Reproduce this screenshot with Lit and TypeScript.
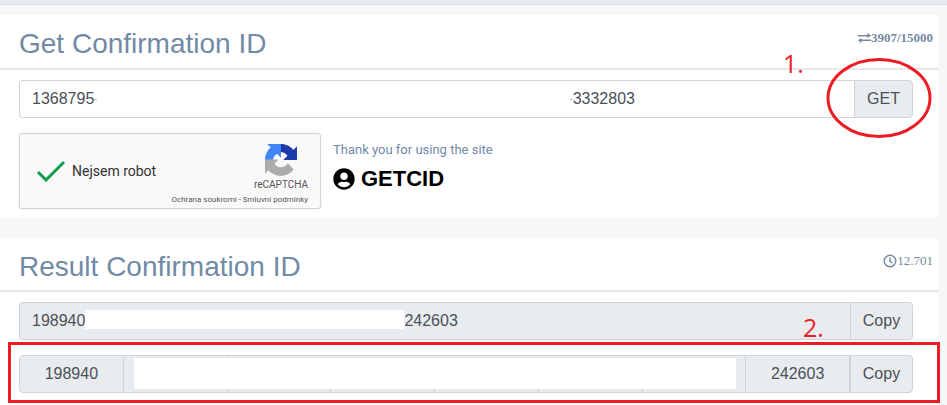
import { LitElement, html, css, svg } from "lit";
import { customElement } from "lit/decorators.js";

const userCircle = svg`<path d="M248 8C111 8 0 119 0 256s111 248 248 248 248-111 248-248S385 8 248 8zm0 96c48.6 0 88 39.4 88 88s-39.4 88-88 88-88-39.4-88-88 39.4-88 88-88zm0 344c-58.7 0-111.3-26.6-146.5-68.2 18.8-35.4 55.6-59.8 98.5-59.8 2.4 0 4.8.4 7.1 1.1 13 4.2 26.6 6.9 40.9 6.9 14.3 0 28-2.7 40.9-6.9 2.3-.7 4.7-1.1 7.1-1.1 42.9 0 79.7 24.4 98.5 59.8C359.3 421.4 306.7 448 248 448z"/>`;

@customElement("app-root")
export class AppRoot extends LitElement {
  static styles = css`
    :host {
      display: block;
      position: relative;
      height: 405px;
      overflow: hidden;
      background: #f6f7f8;
      font-family: "Liberation Sans", Arial, sans-serif;
      color: #495057;
    }
    .topbar {
      height: 4px;
      background: #e9ecef;
      border-bottom: 1px solid #d8dee6;
      margin-bottom: 10px;
    }
    .card {
      width: 938px;
      background: #fff;
      margin-bottom: 20px;
    }
    .card.last {
      height: 200px;
      margin-bottom: 0;
    }
    .head {
      display: flex;
      justify-content: space-between;
      align-items: flex-start;
      height: 53px;
      padding: 0 5px 0 19px;
      border-bottom: 2px solid #e4e8ee;
    }
    .card.last .head {
      height: 52px;
    }
    h2 {
      margin: 0;
      padding-top: 12px;
      font-size: 28px;
      line-height: 34px;
      font-weight: 400;
      color: #718aa5;
    }
    .stat {
      display: flex;
      align-items: center;
      gap: 0;
      margin-top: 16px;
      font-family: "Liberation Serif", serif;
      font-size: 13px;
      line-height: 14px;
      color: #7489a0;
    }
    .stat.bold {
      font-weight: 700;
    }
    .body {
      padding: 10px 25px 9px 19px;
    }
    .group {
      position: relative;
      display: flex;
      height: 38px;
      font-size: 16px;
      line-height: 24px;
    }
    .input {
      flex: 1;
      padding: 6px 12px;
      border: 1px solid #ced4da;
      border-right: none;
      border-radius: 4px 0 0 4px;
      background: #fff;
      white-space: nowrap;
    }
    .dash {
      font-size: 8px;
      vertical-align: 3px;
    }
    .gap {
      display: inline-block;
      width: 473px;
    }
    .addon {
      box-sizing: border-box;
      width: 59px;
      display: flex;
      align-items: center;
      justify-content: center;
      background: #e9ecef;
      border: 1px solid #ced4da;
      border-radius: 0 4px 4px 0;
    }
    .filled {
      flex: 1;
      display: flex;
      align-items: center;
      padding: 0 12px;
      background: #e9ecef;
      border: 1px solid #ced4da;
      border-right: none;
      border-radius: 4px 0 0 4px;
      white-space: nowrap;
    }
    .mask {
      display: inline-block;
      width: 319px;
      height: 19px;
      margin-bottom: 3px;
      background: #fff;
    }
    .copy {
      width: 63px;
    }
    .group.second {
      margin-top: 15px;
    }
    .seg {
      flex: 1;
      display: flex;
      align-items: center;
      justify-content: center;
      background: #e9ecef;
      border: 1px solid #ced4da;
      border-left: none;
    }
    .seg:first-child {
      border-left: 1px solid #ced4da;
      border-radius: 4px 0 0 4px;
    }
    .cover {
      position: absolute;
      left: 115px;
      top: 3px;
      width: 602px;
      height: 31px;
      background: #fff;
    }
    .verify {
      display: flex;
      gap: 12px;
      margin-top: 15px;
    }
    .captcha {
      box-sizing: border-box;
      width: 302px;
      height: 76px;
      display: flex;
      align-items: center;
      justify-content: space-between;
      padding: 0 12px 0 16px;
      background: #f9f9f9;
      border: 1px solid #d3d3d3;
      border-radius: 3px;
      box-shadow: 0 0 3px rgba(0, 0, 0, 0.08);
      font-family: Roboto, sans-serif;
      color: #333;
    }
    .check {
      display: flex;
      align-items: center;
      gap: 7px;
      font-size: 14px;
    }
    .brand {
      align-self: stretch;
      display: flex;
      flex-direction: column;
      align-items: flex-end;
      padding-top: 10px;
    }
    .logo {
      display: block;
      margin-right: 11px;
    }
    .rc {
      margin-top: 2px;
      font-size: 10px;
      line-height: 14px;
      color: #555;
    }
    .terms {
      margin-top: 2px;
      font-size: 8px;
      line-height: 11px;
      color: #555;
      white-space: nowrap;
    }
    .thanks {
      font-family: Roboto, sans-serif;
      font-size: 13px;
      line-height: 16px;
      padding-top: 9px;
      color: #718aa5;
    }
    .site {
      display: flex;
      align-items: center;
      gap: 6px;
      margin-top: 8px;
      font-size: 22px;
      line-height: 26px;
      font-weight: 700;
      color: #000;
    }
    .notes {
      position: absolute;
      left: 0;
      top: 0;
      pointer-events: none;
    }
    .num {
      position: absolute;
      font-family: "Open Sans", sans-serif;
      font-size: 25px;
      line-height: 30px;
      color: #ed1c24;
    }
    .n1 {
      left: 783px;
      top: 48px;
    }
    .n2 {
      left: 803px;
      top: 312px;
    }
  `;

  render() {
    return html`
      <div class="topbar"></div>
      <section class="card">
        <div class="head">
          <h2>Get Confirmation ID</h2>
          <div class="stat bold">
            <svg width="13" height="12" viewBox="0 0 13 12" fill="#7489a0">
              <path d="M0 3h9.5V.8L13 3.7 9.5 6.1V4.4H0zM13 7.6H3.5V5.9L0 8.3l3.5 2.9V9H13z" />
            </svg>
            <span>3907/15000</span>
          </div>
        </div>
        <div class="body">
          <div class="group">
            <div class="input">1368795<span class="dash">-</span><span class="gap"></span><span class="dash">-</span>3332803</div>
            <div class="addon">GET</div>
          </div>
          <div class="verify">
            <div class="captcha">
              <div class="check">
                <svg width="29" height="22" viewBox="0 0 29 22" fill="none" stroke="#0f9d58" stroke-width="3">
                  <path d="M2 12l8 8L28 2" />
                </svg>
                <span>Nejsem robot</span>
              </div>
              <div class="brand">
                <svg class="logo" width="32" height="32" viewBox="0 0 64 64">
                  <path fill="#1c3aa9" d="M64 31.955l-.033-1.37V4.687l-7.16 7.16C50.948 4.674 42.033.093 32.05.093c-10.4 0-19.622 4.96-25.458 12.64l11.736 11.86a15.55 15.55 0 0 1 4.754-5.334c2.05-1.6 4.952-2.906 8.968-2.906.485 0 .86.057 1.135.163 4.976.393 9.288 3.14 11.828 7.124l-8.307 8.307 32.3.01" />
                  <path fill="#4285f4" d="M31.862 0l-1.37.033H4.594l7.16 7.16C4.58 13.05 0 21.965 0 31.95c0 10.4 4.96 19.622 12.64 25.458l11.86-11.736a15.55 15.55 0 0 1-5.334-4.754c-1.6-2.05-2.906-4.952-2.906-8.968 0-.485.057-.86.163-1.135.393-4.976 3.14-9.288 7.124-11.828l8.307 8.307L31.862 0" />
                  <path fill="#ababab" d="M.001 31.955l.033 1.37v25.898l7.16-7.16c5.86 7.173 14.774 11.754 24.76 11.754 10.4 0 19.622-4.96 25.458-12.64L45.676 38.318a15.55 15.55 0 0 1-4.754 5.334c-2.05 1.6-4.952 2.906-8.968 2.906-.485 0-.86-.057-1.135-.163-4.976-.393-9.288-3.14-11.828-7.124l8.307-8.307-32.3.01" />
                </svg>
                <div class="rc">reCAPTCHA</div>
                <div class="terms">Ochrana soukromí - Smluvní podmínky</div>
              </div>
            </div>
            <div>
              <div class="thanks">Thank you for using the site</div>
              <div class="site">
                <svg width="22" height="22" viewBox="0 0 496 512" fill="#000">${userCircle}</svg>
                <span>GETCID</span>
              </div>
            </div>
          </div>
        </div>
      </section>
      <section class="card last">
        <div class="head">
          <h2>Result Confirmation ID</h2>
          <div class="stat">
            <svg width="14" height="14" viewBox="0 0 14 14" fill="none" stroke="#7489a0" stroke-width="1.4">
              <circle cx="7" cy="7" r="5.8" />
              <path d="M7 3.5V7.5L9.5 9" />
            </svg>
            <span>12.701</span>
          </div>
        </div>
        <div class="body">
          <div class="group">
            <div class="filled">198940<span class="mask"></span>242603</div>
            <div class="addon copy">Copy</div>
          </div>
          <div class="group second">
            <div class="seg">198940</div>
            <div class="seg"></div>
            <div class="seg"></div>
            <div class="seg"></div>
            <div class="seg"></div>
            <div class="seg"></div>
            <div class="seg"></div>
            <div class="seg">242603</div>
            <div class="addon copy">Copy</div>
            <div class="cover"></div>
          </div>
        </div>
      </section>
      <svg class="notes" width="947" height="405" fill="none" stroke="#ed1c24" stroke-width="3">
        <ellipse cx="879" cy="98" rx="51" ry="38.5" />
        <rect x="9.5" y="343.5" width="929" height="58" />
      </svg>
      <div class="num n1">1.</div>
      <div class="num n2">2.</div>
    `;
  }
}
